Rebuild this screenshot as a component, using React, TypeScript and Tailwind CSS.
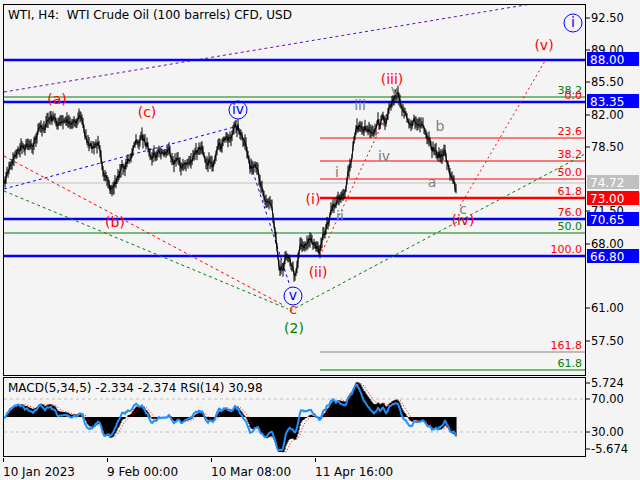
import React from "react";

const F = { fontFamily: '"DejaVu Sans", Verdana, sans-serif' };

const way: [number, number][] = [
  [4, 185], [15, 150], [30, 140], [50, 118], [62, 125], [80, 113], [90, 150], [100, 145], [110, 195], [120, 172], [140, 138], [155, 150], [170, 150], [185, 165], [200, 150], [215, 160], [230, 135], [238, 124], [250, 165], [262, 185], [272, 205], [280, 262], [290, 250], [295, 276], [300, 240], [315, 240], [320, 252], [330, 215], [345, 185], [352, 160], [356, 126], [370, 125], [385, 118], [395, 100], [410, 115], [420, 125], [430, 150], [445, 155], [455, 186],
];

function rng(seed: number) {
  let s = seed;
  return () => {
    s = (s * 16807) % 2147483647;
    return s / 2147483647;
  };
}

function buildPrice() {
  const r = rng(7);
  const pts: { x: number; y: number }[] = [];
  let n = 0;
  for (let x = 4; x <= 456; x += 1) {
    let i = 0;
    while (i < way.length - 2 && way[i + 1][0] < x) i++;
    const [x0, y0] = way[i];
    const [x1, y1] = way[i + 1];
    const t = Math.min(1, Math.max(0, (x - x0) / (x1 - x0)));
    const base = y0 + (y1 - y0) * t;
    n = n * 0.75 + (r() - 0.5) * 9;
    pts.push({ x, y: base + n });
  }
  return pts;
}
const price = buildPrice();
const r2 = rng(99);
const pricePath = price
  .map((p, i) => {
    const hi = p.y - 2 - r2() * 6;
    const lo = p.y + 2 + r2() * 6;
    return `M${p.x},${hi.toFixed(1)} L${p.x},${lo.toFixed(1)}` + (i ? ` M${p.x - 1},${price[i - 1].y.toFixed(1)} L${p.x},${p.y.toFixed(1)}` : "");
  })
  .join(" ");

function ema(arr: number[], n: number) {
  const k = 2 / (n + 1);
  const out: number[] = [];
  let e = arr[0];
  for (const v of arr) {
    e = v * k + e * (1 - k);
    out.push(e);
  }
  return out;
}
const ys = price.map((p) => p.y);
const e5 = ema(ys, 5);
const e34 = ema(ys, 34);
const macd = e5.map((v, i) => -(v - e34[i]) * 0.75);
const sig = ema(macd, 5);
const zero = 417;
const hist = price
  .map((p, i) => `M${p.x},${zero} L${p.x},${Math.max(382, Math.min(452, zero - macd[i])).toFixed(1)}`)
  .join(" ");
const sigPath = price
  .map((p, i) => `${i ? "L" : "M"}${p.x + 1},${Math.max(382, Math.min(452, zero - sig[i])).toFixed(1)}`)
  .join(" ");
const e3 = ema(ys, 3);
const e20 = ema(ys, 20);
const rsiPath = price
  .map((p, i) => {
    const v = zero - (e20[i] - e3[i]) * 0.9;
    return `${i ? "L" : "M"}${p.x},${Math.max(384, Math.min(450, v)).toFixed(1)}`;
  })
  .join(" ");

type L = { t: string; x: number; y: number; c: string; circle?: boolean };
const labels: L[] = [
  { t: "(a)", x: 57, y: 103, c: "#ff0000" },
  { t: "(c)", x: 147, y: 116, c: "#ff0000" },
  { t: "(b)", x: 115, y: 226, c: "#ff0000" },
  { t: "iv", x: 238, y: 113, c: "#0000ff", circle: true },
  { t: "(i)", x: 313, y: 203, c: "#ff0000" },
  { t: "(ii)", x: 318, y: 276, c: "#ff0000" },
  { t: "(iii)", x: 392, y: 83, c: "#ff0000" },
  { t: "v", x: 293, y: 299, c: "#0000ff", circle: true },
  { t: "c", x: 293, y: 313, c: "#cc3300" },
  { t: "(2)", x: 294, y: 332, c: "#008000" },
  { t: "i", x: 337, y: 176, c: "#808080" },
  { t: "ii", x: 340, y: 220, c: "#808080" },
  { t: "iii", x: 360, y: 109, c: "#808080" },
  { t: "iv", x: 384, y: 160, c: "#808080" },
  { t: "v", x: 395, y: 94, c: "#808080" },
  { t: "b", x: 440, y: 130, c: "#808080" },
  { t: "a", x: 432, y: 186, c: "#808080" },
  { t: "c", x: 463, y: 213, c: "#808080" },
  { t: "(iv)", x: 463, y: 224, c: "#ff0000" },
  { t: "(v)", x: 544, y: 49, c: "#ff0000" },
  { t: "i", x: 573, y: 26, c: "#0000ff", circle: true },
];

const fib: [number, string, number][] = [
  [137, "23.6", 1], [160, "38.2", 1], [178, "50.0", 1], [197, "61.8", 2.5], [218, "76.0", 1], [255, "100.0", 1], [351, "161.8", 1],
];

const axisTicks: [number, string][] = [
  [18, "92.50"], [50, "89.00"], [82, "85.50"], [115, "82.00"], [147, "78.50"], [211, "71.50"], [244, "68.00"], [308, "61.00"], [341, "57.50"],
];
const boxes: [number, string, string][] = [
  [59, "88.00", "#0000ff"], [101, "83.35", "#0000ff"], [182, "74.72", "#c0c0c0"], [198, "73.00", "#ff0000"], [219, "70.65", "#0000ff"], [256, "66.80", "#0000ff"],
];

const times = ["10 Jan 2023", "9 Feb 00:00", "10 Mar 08:00", "11 Apr 16:00"];

export default function App() {
  return (
    <div className="w-[640px] h-[480px] bg-[#f4f4f4] text-black overflow-hidden pt-[4px] pl-[3px] flex flex-col gap-[1px]" style={F}>
      <div className="flex">
        <div className="relative w-[583px] h-[372px] border border-black">
          <div className="absolute left-[4px] top-[1px] text-[12px]">WTI, H4:&nbsp; WTI Crude Oil (100 barrels) CFD, USD</div>
          <svg width="581" height="370" viewBox="4 4 581 370" className="block">
            <line x1="4" y1="91" x2="585" y2="-6" stroke="#6a0dad" strokeDasharray="3 3" />
            <line x1="4" y1="96" x2="585" y2="96" stroke="#008000" />
            <line x1="4" y1="182" x2="585" y2="182" stroke="#c0c0c0" />
            <line x1="4" y1="232" x2="585" y2="232" stroke="#008000" />
            {fib.map(([y, t, w]) => (
              <g key={t}>
                <line x1="320" y1={y} x2="585" y2={y} stroke={t === "161.8" ? "#555" : "#ff0000"} strokeWidth={t === "161.8" ? 0.7 : w} />
                <text x="582" y={y - 3} textAnchor="end" fontSize="11" fill="#ff0000">{t}</text>
              </g>
            ))}
            <line x1="320" y1="369" x2="585" y2="369" stroke="#008000" />
            <text x="582" y="366" textAnchor="end" fontSize="11" fill="#008000">61.8</text>
            <text x="582" y="229" textAnchor="end" fontSize="11" fill="#008000">50.0</text>
            <text x="582" y="93" textAnchor="end" fontSize="11" fill="#008000">38.2</text>
            <text x="582" y="98" textAnchor="end" fontSize="11" fill="#ff0000">0.0</text>
            {[59, 101, 218, 255].map((y) => (
              <line key={y} x1="4" y1={y} x2="585" y2={y} stroke="#0000ff" strokeWidth="2.5" />
            ))}
            <line x1="4" y1="188" x2="238" y2="125" stroke="#0000ff" strokeDasharray="3 3" />
            <line x1="238" y1="125" x2="290" y2="285" stroke="#0000ff" strokeDasharray="3 3" />
            <line x1="4" y1="155" x2="285" y2="305" stroke="#ff0000" strokeDasharray="3 3" />
            <line x1="4" y1="190" x2="288" y2="308" stroke="#008000" strokeDasharray="3 3" />
            <line x1="290" y1="310" x2="585" y2="153" stroke="#008000" strokeDasharray="3 3" />
            <line x1="320" y1="255" x2="395" y2="96" stroke="#ff0000" strokeDasharray="2 3" />
            <line x1="460" y1="205" x2="545" y2="60" stroke="#ff0000" strokeDasharray="2 3" />
            <path d={pricePath} stroke="#000" strokeWidth="1" fill="none" />
            {labels.map((l, i) => (
              <g key={i}>
                {l.circle && <circle cx={l.x} cy={l.y - 4} r="9" fill="none" stroke="#0000ff" />}
                <text x={l.x} y={l.y} textAnchor="middle" fontSize="14" fill={l.c}>{l.t}</text>
              </g>
            ))}
          </svg>
        </div>
        <svg width="54" height="372" viewBox="586 4 54 372" className="block">
          {axisTicks.map(([y, t]) => (
            <g key={t}>
              <line x1="586" y1={y} x2="590" y2={y} stroke="#000" />
              <text x="591" y={y + 4} fontSize="11.5">{t}</text>
            </g>
          ))}
          {boxes.map(([y, t, c]) => (
            <g key={t}>
              <rect x="587" y={y - 7} width="52" height="14" fill={c} />
              <text x="590" y={y + 5} fontSize="12" fill="#fff">{t}</text>
            </g>
          ))}
        </svg>
      </div>
      <div className="flex">
        <div className="relative w-[583px] h-[80px] border border-black">
          <div className="absolute left-[4px] top-[1px] text-[12px]">MACD(5,34,5) -2.334 -2.374 RSI(14) 30.98</div>
          <svg width="581" height="78" viewBox="4 378 581 78" className="block">
            <line x1="4" y1="399" x2="585" y2="399" stroke="#c0c0c0" strokeDasharray="3 3" />
            <line x1="4" y1="432" x2="585" y2="432" stroke="#c0c0c0" strokeDasharray="3 3" />
            <path d={hist} stroke="#000" strokeWidth="1.1" />
            <path d={sigPath} stroke="#ff0000" strokeDasharray="1 2" fill="none" />
            <path d={rsiPath} stroke="#1e90ff" strokeWidth="2" fill="none" />
          </svg>
        </div>
        <svg width="54" height="80" viewBox="586 377 54 80" className="block">
          {([[383, "5.724"], [399, "70.00"], [432, "30.00"], [449, "-5.674"]] as [number, string][]).map(([y, t]) => (
            <g key={t}>
              <line x1="586" y1={y} x2="590" y2={y} stroke="#000" />
              <text x="591" y={y + 4} fontSize="11.5">{t}</text>
            </g>
          ))}
        </svg>
      </div>
      <div className="flex w-[583px] text-[12px]">
        {times.map((t) => (
          <div key={t} className="w-[104px] flex flex-col">
            <div className="w-px h-[4px] bg-black" />
            <div className="mt-[1px] whitespace-nowrap">{t}</div>
          </div>
        ))}
      </div>
    </div>
  );
}
